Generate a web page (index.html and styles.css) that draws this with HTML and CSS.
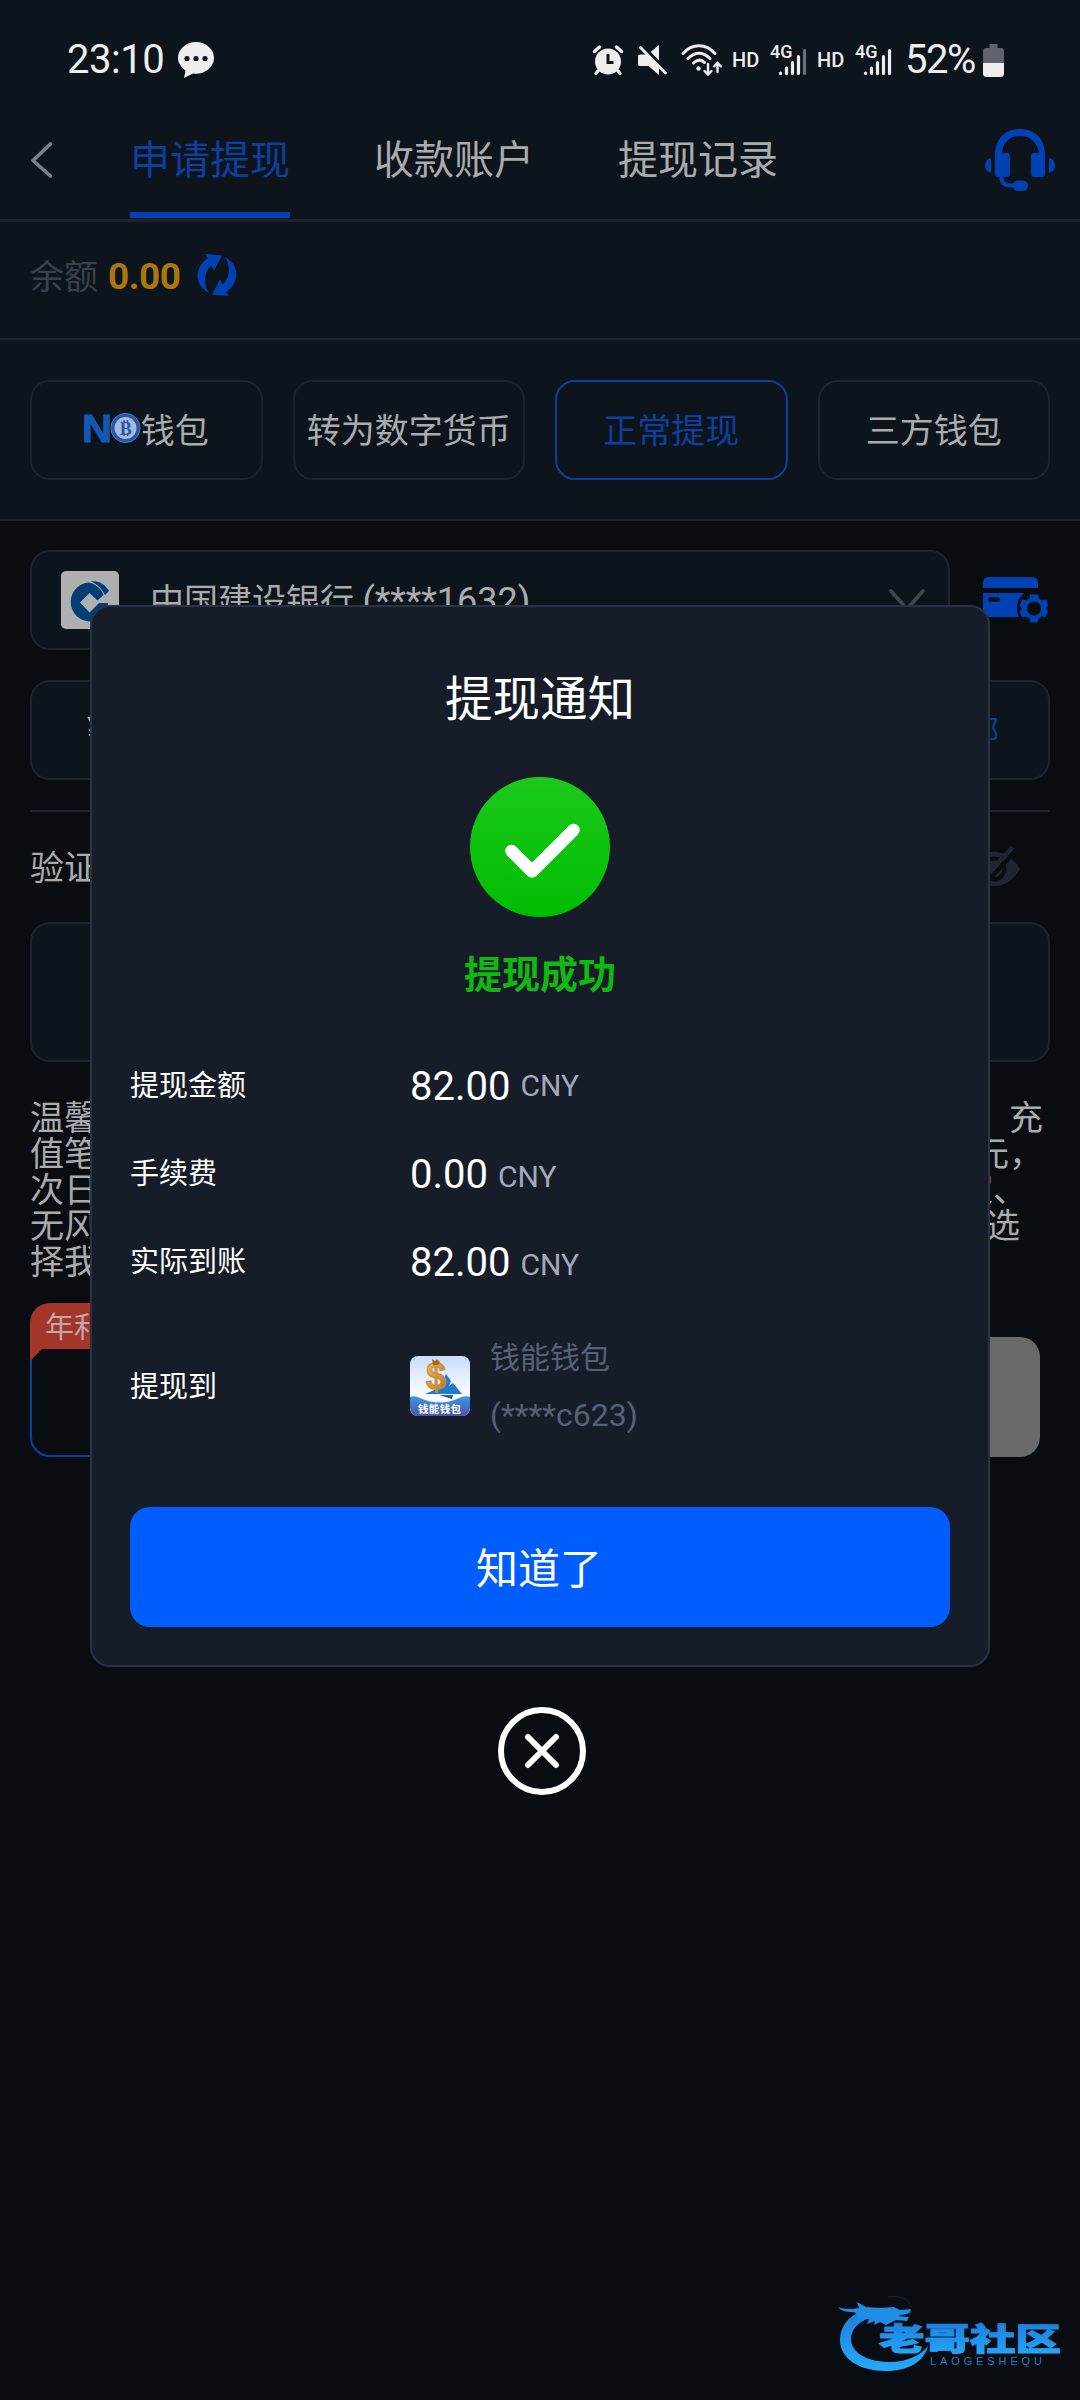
FILE: index.html
```html
<!DOCTYPE html>
<html lang="zh-CN">
<head>
  <meta charset="UTF-8">
  <meta name="viewport" content="width=device-width, initial-scale=1.0">
  <title>申请提现</title>
  <link rel="stylesheet" href="styles.css">
</head>
<body>
  <div class="screen">
    <div class="statusbar">
      <span class="time">23:10</span>
      <svg class="bubble" width="36" height="36" viewBox="0 0 36 36">
        <path fill="#eee" d="M18 0C8 0 0 7 0 16c0 5 3 9 7.500 12.500L6 36l9-4.500c1 .2 2 .2 3 .2 10 0 18-7 18-15.700S28 0 18 0z"/>
        <circle cx="9" cy="16.500" r="2.600" fill="#0d141c"/><circle cx="18" cy="16.500" r="2.600" fill="#0d141c"/><circle cx="27" cy="16.500" r="2.600" fill="#0d141c"/>
      </svg>
      <div class="status-icons">
        <svg class="alarm" width="30" height="30" viewBox="0 0 30 30">
          <circle cx="15" cy="16.500" r="13" fill="#eee"/>
          <path d="M1.500 6.500l5-4.500M28.500 6.500l-5-4.500M5 26l-2 2.500M25 26l2 2.500" stroke="#eee" stroke-width="3.400" stroke-linecap="round"/>
          <path d="M15 9v8.500h5.500" fill="none" stroke="#0d141c" stroke-width="3"/>
        </svg>
        <svg class="mute" width="30" height="30" viewBox="0 0 30 30">
          <path fill="#eee" d="M2 9.500h8L21 19v11l-10.500-9H2q-2 0-2-2v-7.500q0-2 2-2zM12 7.500L21 0v17z"/>
          <path d="M4 0l26 26.500" stroke="#0d141c" stroke-width="2.600"/>
          <path d="M2.500 2.500l25 25.500" stroke="#eee" stroke-width="2.800" stroke-linecap="round"/>
        </svg>
        <svg class="wifi" width="42" height="32" viewBox="0 0 42 32">
          <g fill="none" stroke="#eee" stroke-width="3" stroke-linecap="round">
            <path d="M2 9.500C11-1 25-1 34 9.500M7 14.500c7-7 15-7 22 0M12.500 19c4-4 8-3.500 11-.5"/>
            <path d="M27 20v9M23.500 27l3.500 3.500 3.500-3.500M36.500 28v-8M33 22.500l3.500-3.500 3.500 3.500" stroke-width="2.400"/>
          </g>
          <circle cx="17.500" cy="24.500" r="2.200" fill="#eee"/>
        </svg>
        <span class="hd">HD</span>
        <svg class="signal" width="38" height="32" viewBox="0 0 38 32">
          <text x="0" y="14" class="g4">4G</text>
          <g stroke="#eee" stroke-width="3.200" stroke-linecap="round"><path d="M10.500 29v.4M16.500 24v5.400M22.500 18.500v10.900M28.500 12.500v16.900"/><path d="M34.500 6.500v22.900" stroke="#6d7076"/></g>
        </svg>
        <span class="hd">HD</span>
        <svg class="signal" width="38" height="32" viewBox="0 0 38 32">
          <text x="0" y="14" class="g4">4G</text>
          <g stroke="#eee" stroke-width="3.200" stroke-linecap="round"><path d="M10.500 29v.4M16.500 24v5.400M22.500 18.500v10.900M28.500 12.500v16.900M34.500 6.500v22.900"/></g>
        </svg>
        <span class="percent">52%</span>
        <svg class="battery" width="21" height="33" viewBox="0 0 21 33">
          <path fill="#5f616b" d="M6.500 0h8v4H18q3 0 3 3v12H0V7q0-3 3-3h3.500z"/>
          <path fill="#eee" d="M0 19h21v10.500q0 3.500-3.500 3.500h-14Q0 33 0 29.500z"/>
        </svg>
      </div>
    </div>

    <header>
      <svg class="back" width="24" height="38" viewBox="0 0 24 38"><path d="M20.500 3L3 19.500 20.500 35" fill="none" stroke="#7c828b" stroke-width="3.600" stroke-linecap="round" stroke-linejoin="round"/></svg>
      <nav class="tabs">
        <span class="tab active">申请提现</span>
        <span class="tab">收款账户</span>
        <span class="tab">提现记录</span>
      </nav>
      <svg class="service" width="70" height="62" viewBox="0 0 70 62">
        <g fill="#0041b3">
          <path d="M10 26C10 9 21 0 35 0s25 9 25 26v19q0 3-3 3H49q-3 0-3-3V27q0-3 3-3h5C52 13 45 7 35 7S18 13 17 24h5q3 0 3 3v18q0 3-3 3h-9q-3 0-3-3z"/>
          <path d="M6 29v15C2 43 0 40 0 36.500S2 30 6 29zM64 29v15c4-1 6-4 6-7.500S68 30 64 29z"/>
          <rect x="27.500" y="51.500" width="15.500" height="10.500" rx="5.200"/>
        </g>
        <path d="M16 46c0 8 4 10.500 9 10.500h5" fill="none" stroke="#0041b3" stroke-width="4"/>
      </svg>
    </header>

    <div class="balance">
      <span class="balance-label">余额</span>
      <span class="balance-value">0.00</span>
      <svg width="40" height="42" viewBox="0 0 40 42">
        <g fill="#0041b3">
          <path d="M8 0l17 1.500-8 15-3-5C7 19 6 29 12 39-3 31-3 13 11 4z"/>
          <path d="M32 42l-17-1.500 8-15 3 5C33 23 34 13 28 3c15 8 15 26 1 35z"/>
        </g>
      </svg>
    </div>

    <div class="methods">
      <div class="method">
        <svg class="no-logo" width="57" height="30" viewBox="0 0 57 30">
          <text x="-2" y="28.500" class="no-n" textLength="30" lengthAdjust="spacingAndGlyphs">N</text>
          <circle cx="41.500" cy="15" r="12.700" fill="#a9bad6" stroke="#2458b0" stroke-width="3.500"/>
          <circle cx="41.500" cy="15" r="14.600" fill="none" stroke="#6d92cf" stroke-width=".7"/>
          <text x="41.800" y="21.500" class="no-b" text-anchor="middle">B</text>
          <path d="M40 7v3M43.500 7v3M40 20v3M43.500 20v3" stroke="#2458b0" stroke-width="1.500"/>
        </svg>
        <span>钱包</span>
      </div>
      <div class="method">转为数字货币</div>
      <div class="method active">正常提现</div>
      <div class="method">三方钱包</div>
    </div>

    <div class="form">
      <div class="bank-row">
        <div class="bank">
          <svg width="58" height="58" viewBox="0 0 58 58">
            <rect width="58" height="58" rx="5" fill="#adafb0"/>
            <path fill="#003e74" d="M28 11.500a19.500 19.500 0 1 0 19 27.500V32H38l-9.500 9.500L19 31.500l9.500-9.500 8 7.500 6-5.500C40 17 34 13 28 11.500z"/>
            <path fill="#003e74" d="M30 10.500c8-1 14 3 18 9.500l-4 4C40 17 36 13 30 10.500z"/>
          </svg>
          <span class="bank-name">中国建设银行 <span class="bank-tail">(****1632)</span></span>
          <svg class="chevron" width="38" height="24" viewBox="0 0 38 24"><path d="M3 3l16 18L35 3" fill="none" stroke="#3f4652" stroke-width="3.600" stroke-linecap="round"/></svg>
        </div>
        <svg class="card-icon" width="65" height="46" viewBox="0 0 65 46">
          <g fill="#0041b3">
            <path d="M0 11V6q0-6 6-6h43q6 0 6 6v5zM0 16h41.500Q34 22 34 31q0 5 2 9H6q-6 0-6-6z"/>
            <path fill-rule="evenodd" d="M47 17.500h8l1 4 3.500 2 4-1.200 1.500 6.200-2 2.500 2 3.500-2.500 5.500-4-.5-3 2-1 4h-7l-1-4-3.500-2-4 1-2.500-5.500 2.500-3.500-2.500-3 2.500-6.200 4 1.200 3.500-2zM51 24.500a7 7 0 1 0 0 14 7 7 0 1 0 0-14z"/>
          </g>
          <path d="M7.500 22.500h7" stroke="#090c11" stroke-width="4.500" stroke-linecap="round"/>
        </svg>
      </div>

      <div class="amount">
        <span class="yen">¥</span>
        <span class="all">全部</span>
      </div>

      <div class="code-label">
        <span>验证</span>
        <svg width="52" height="42" viewBox="0 0 52 42">
          <path fill="#1f2531" d="M0 24C13 1 39 1 52 24 39 47 13 47 0 24z"/>
          <circle cx="26" cy="24" r="10.500" fill="none" stroke="#090c11" stroke-width="4"/>
          <path d="M13 43L49 5" stroke="#090c11" stroke-width="4"/>
          <path d="M10 39L45 2" stroke="#1f2531" stroke-width="4.500"/>
        </svg>
      </div>
      <div class="code-box"></div>

      <div class="tips">
        <p><span>温馨提</span><span>，充</span></p>
        <p><span>值笔</span><span>元，</span></p>
        <p><span>次日</span><span>家、</span></p>
        <p><span>无风</span><span>选</span></p>
        <p><span>择我</span></p>
      </div>

      <div class="actions">
        <div class="action outline">
          <div class="badge">年利</div>
          <svg class="badge-tail" width="12" height="12" viewBox="0 0 12 12"><path d="M0 0h12L0 12z" fill="#a4352b"/></svg>
        </div>
        <div class="action disabled"></div>
      </div>
    </div>

    <div class="overlay">
      <div class="modal">
        <h2>提现通知</h2>
        <svg class="success" width="140" height="140" viewBox="0 0 140 140">
          <defs><linearGradient id="green" x1="0" y1="0" x2="0" y2="1"><stop offset="0" stop-color="#1bc91b"/><stop offset="1" stop-color="#00bc00"/></linearGradient></defs>
          <circle cx="70" cy="70" r="70" fill="url(#green)"/>
          <path d="M41.500 74L62 94.500 103.500 53" fill="none" stroke="#fff" stroke-width="12.500" stroke-linecap="round" stroke-linejoin="round"/>
        </svg>
        <p class="status">提现成功</p>
        <div class="row"><span class="label">提现金额</span><span class="value">82.00</span><span class="unit raised">CNY</span></div>
        <div class="row"><span class="label">手续费</span><span class="value">0.00</span><span class="unit">CNY</span></div>
        <div class="row"><span class="label">实际到账</span><span class="value">82.00</span><span class="unit">CNY</span></div>
        <div class="row target">
          <span class="label">提现到</span>
          <svg class="wallet" width="60" height="60" viewBox="0 0 60 60">
            <defs>
              <linearGradient id="sky" x1="0" y1="0" x2="0" y2="1"><stop offset="0" stop-color="#c9dcfa"/><stop offset=".6" stop-color="#f7faff"/></linearGradient>
              <linearGradient id="sea" x1="0" y1="0" x2="0" y2="1"><stop offset="0" stop-color="#3f9ae8"/><stop offset="1" stop-color="#4a52a8"/></linearGradient>
              <linearGradient id="gold" x1="0" y1="0" x2="1" y2="1"><stop offset="0" stop-color="#f3bd62"/><stop offset="1" stop-color="#b87420"/></linearGradient>
              <clipPath id="round"><rect width="60" height="60" rx="8"/></clipPath>
            </defs>
            <g clip-path="url(#round)">
              <rect width="60" height="60" fill="url(#sky)"/>
              <path d="M36 18l5 7-2 5 4-3 9 11H15l14-6z" fill="#1d7ccb"/>
              <path d="M29 39h14l-1 4z" fill="#1765ae"/>
              <text x="26" y="32.500" class="dollar" text-anchor="middle">$</text>
              <path d="M22 3l3 2 2-2 3 3-2 3h-5z" fill="#a8691d"/>
              <path d="M0 41q5-2 10 1 20 9 39 0 6-3 11-1v19H0z" fill="url(#sea)"/>
              <text x="8" y="57" class="wallet-name" textLength="43">钱能钱包</text>
            </g>
          </svg>
          <div class="account"><span>钱能钱包</span><span class="tail">(****c623)</span></div>
        </div>
        <button class="ok">知道了</button>
      </div>
      <svg class="close" width="88" height="88" viewBox="0 0 88 88">
        <circle cx="44" cy="44" r="41" fill="none" stroke="#fff" stroke-width="6"/>
        <path d="M30 30l28 28M58 30L30 58" stroke="#fff" stroke-width="6" stroke-linecap="round"/>
      </svg>
    </div>

    <svg class="watermark" width="224" height="80" viewBox="0 0 224 80">
      <defs><linearGradient id="blue" x1="0" y1="0" x2="0" y2="1"><stop offset="0" stop-color="#1c7fdc"/><stop offset="1" stop-color="#25a9fb"/></linearGradient></defs>
      <path fill="url(#blue)" d="M24 18C10 23 2 34 2 47c0 19 20 31 46 31 22 0 38-9 42-25-8 10-22 16-38 16-22 0-39-9-39-23 0-9 6-16 18-21z"/>
      <path fill="#1f8ce6" d="M0 14C8 17 15 16 21 15L19 9 28 14 42 15 56 14 62 17 73 16 72 20 60 23 71 24 69 28 58 27 48 32 42 29 36 32 37 28 29 31 31 26 22 27C18 24 20 19 14 19 8 19 3 18 0 14z"/>
      <path d="M50 4c10-2 23 2 22 10" fill="none" stroke="#12283c" stroke-width="1"/>
      <text x="41" y="57" class="wm-name" textLength="182" lengthAdjust="spacingAndGlyphs">老哥社区</text>
      <text x="92" y="71.500" class="wm-latin" textLength="112">LAOGESHEQU</text>
    </svg>
  </div>
</body>
</html>
```
FILE: styles.css
```css
* {
  box-sizing: border-box;
}
body {
  margin: 0;
  background-color: #090c11;
  font-family: Roboto, "Noto Sans CJK SC", sans-serif;
  color: #a9abad;
}
p, h2 {
  margin: 0;
  font-weight: normal;
}
svg {
  display: block;
  flex-shrink: 0;
  overflow: visible;
}
.screen {
  position: relative;
  width: 1080px;
  height: 2400px;
  overflow: hidden;
  background-color: #090c11;
}

/* status bar */
.statusbar {
  height: 100px;
  padding: 20px 76px 0 67px;
  display: flex;
  align-items: center;
  background-color: #0d141c;
  color: #eee;
}
.time, .percent {
  font-size: 40px;
  line-height: 80px;
}
.time {
  width: 111px;
  letter-spacing: -0.5px;
}
.status-icons {
  margin-left: auto;
  display: flex;
  align-items: center;
}
.mute {
  margin-left: 15px;
}
.wifi {
  margin-left: 13px;
}
.hd {
  width: 38px;
  padding-left: 9px;
  font-size: 20px;
  font-weight: 500;
  white-space: nowrap;
}
.signal {
  margin: 0 0 0 9px;
}
.g4 {
  font-size: 18px;
  font-weight: 500;
  fill: #eee;
}
.percent {
  margin-left: 12px;
  width: 76px;
  letter-spacing: -1.5px;
}
.battery {
  margin-left: 2px;
}

/* header */
header {
  height: 122px;
  padding: 0 25px 0 30px;
  display: flex;
  background-color: #0d141c;
  border-bottom: 3px solid #1e242e;
}
.back {
  margin-top: 41px;
}
.tabs {
  display: flex;
  gap: 84px;
  margin-left: 76px;
}
.tab {
  height: 118px;
  padding-top: 10px;
  font-size: 40px;
  line-height: 102px;
  border-bottom: 6px solid transparent;
}
.tab.active {
  color: #0d3f9d;
  border-color: #0041b3;
}
.service {
  margin: 29px 0 0 auto;
}

.balance {
  height: 118px;
  padding: 0 30px 10px;
  display: flex;
  align-items: center;
  background-color: #0d141c;
  border-bottom: 2px solid #1e242e;
}
.balance-label {
  width: 78px;
  padding-bottom: 2px;
  font-size: 34px;
  color: #3a414d;
}
.balance-value {
  width: 89px;
  padding-top: 3px;
  font-size: 37px;
  font-weight: bold;
  letter-spacing: -0.5px;
  color: #ac770f;
}

.methods {
  height: 181px;
  padding: 40px 30px 0;
  display: grid;
  grid-template-columns: repeat(4, 1fr);
  gap: 30px;
  background-color: #0d141c;
  border-bottom: 2px solid #1e242e;
}
.method {
  height: 100px;
  display: flex;
  align-items: center;
  justify-content: center;
  padding-bottom: 4px;
  border: 2px solid #1e242e;
  border-radius: 20px;
  font-size: 34px;
  white-space: nowrap;
}
.method.active {
  border-color: #0d3f9d;
  color: #0d3f9d;
}
.no-n {
  font: 900 39px "Liberation Sans", sans-serif;
  fill: #1557b4;
  stroke: #1557b4;
}
.no-b {
  font: bold 18px "Liberation Serif", serif;
  fill: #2458b0;
}

/* form */
.form {
  padding: 29px 30px 0;
}
.bank-row {
  display: flex;
  align-items: center;
}
.bank {
  width: 920px;
  height: 100px;
  padding: 0 22px 0 29px;
  display: flex;
  align-items: center;
  background-color: #0d141c;
  border: 2px solid #1e242e;
  border-radius: 20px;
}
.bank-name {
  margin-left: 31px;
  padding-bottom: 4px;
  font-size: 34px;
}
.bank-tail {
  font-size: 36px;
}
.chevron {
  margin-left: auto;
}
.card-icon {
  margin-left: 33px;
}
.amount {
  height: 100px;
  margin: 30px 0;
  padding: 0 49px 3px 55px;
  display: flex;
  align-items: center;
  justify-content: space-between;
  background-color: #0d141c;
  border: 2px solid #1e242e;
  border-radius: 20px;
}
.yen {
  font-size: 34px;
}
.all {
  font-size: 29px;
  color: #0d3f9d;
}
.code-label {
  height: 112px;
  padding: 0 30px 3px 0;
  display: flex;
  align-items: center;
  justify-content: space-between;
  border-top: 2px solid #1e242e;
  font-size: 34px;
}
.code-box {
  height: 140px;
  background-color: #0d141c;
  border: 2px solid #1e242e;
  border-radius: 20px;
}
.tips {
  margin-top: 38px;
  font-size: 34px;
  line-height: 36px;
}
.tips p {
  height: 36px;
  padding-right: 7px;
  display: flex;
  justify-content: space-between;
}
.tips p:nth-child(3) {
  padding-right: 23px;
}
.tips p:nth-child(4) {
  padding-right: 30px;
}
.actions {
  margin-top: 57px;
  padding-right: 10px;
  display: grid;
  grid-template-columns: 1fr 1fr;
  gap: 30px;
}
.action {
  position: relative;
  height: 120px;
  border-radius: 20px;
}
.action.outline {
  border: 2px solid #0d3f9d;
}
.action.disabled {
  background-color: #696969;
}
.badge {
  position: absolute;
  left: -2px;
  top: -36px;
  width: 240px;
  height: 46px;
  padding-left: 15px;
  border-radius: 20px 20px 0 0;
  background-color: #a4352b;
  font-size: 29px;
  line-height: 50px;
  color: #c0aaa8;
}
.badge-tail {
  position: absolute;
  left: -2px;
  top: 10px;
}

/* dialog */
.overlay {
  position: absolute;
  inset: 0;
  display: flex;
  flex-direction: column;
  align-items: center;
  justify-content: center;
}
.modal {
  width: 900px;
  height: 1062px;
  padding: 58px 38px 38px;
  background-color: #161d28;
  border: 2px solid #2a3342;
  border-radius: 20px;
  color: #fff;
}
.modal h2 {
  font-size: 47.500px;
  line-height: 70px;
  text-align: center;
}
.success {
  margin: 42px auto 33px;
}
.status {
  margin-bottom: 41px;
  font-size: 38px;
  font-weight: 600;
  line-height: 50px;
  text-align: center;
  color: #12b812;
}
.row {
  height: 88px;
  display: flex;
  align-items: center;
}
.label {
  width: 280px;
  padding-bottom: 4px;
  font-size: 29px;
}
.value {
  margin-right: 10px;
  padding-top: 2px;
  font-size: 40px;
}
.unit {
  padding-top: 7px;
  font-size: 30px;
  color: #a2a9bb;
}
.unit.raised {
  padding-top: 1px;
}
.row.target {
  height: 162px;
}
.account {
  display: flex;
  flex-direction: column;
  margin-left: 20px;
  font-size: 30px;
  line-height: 57px;
  color: #566178;
}
.account .tail {
  padding-top: 1px;
  font-size: 32px;
}
.dollar {
  font: bold 36px "Liberation Sans", sans-serif;
  fill: url(#gold);
  stroke: #c8882f;
  stroke-width: 1;
}
.wallet-name {
  font-size: 10.500px;
  font-weight: bold;
  fill: #fff;
}
.ok {
  display: block;
  width: 100%;
  height: 120px;
  margin-top: 40px;
  padding: 0 2px 3px 0;
  border: none;
  border-radius: 20px;
  background-color: #005dff;
  color: #fff;
  font-family: inherit;
  font-size: 42px;
}
.close {
  margin: 40px 0 0 4px;
}

.watermark {
  position: absolute;
  left: 838px;
  top: 2293px;
}
.wm-name {
  font-size: 31px;
  font-weight: 900;
  fill: url(#blue);
  stroke: url(#blue);
}
.wm-latin {
  font: 11px "Liberation Sans", sans-serif;
  fill: #1f7cc4;
}
```
